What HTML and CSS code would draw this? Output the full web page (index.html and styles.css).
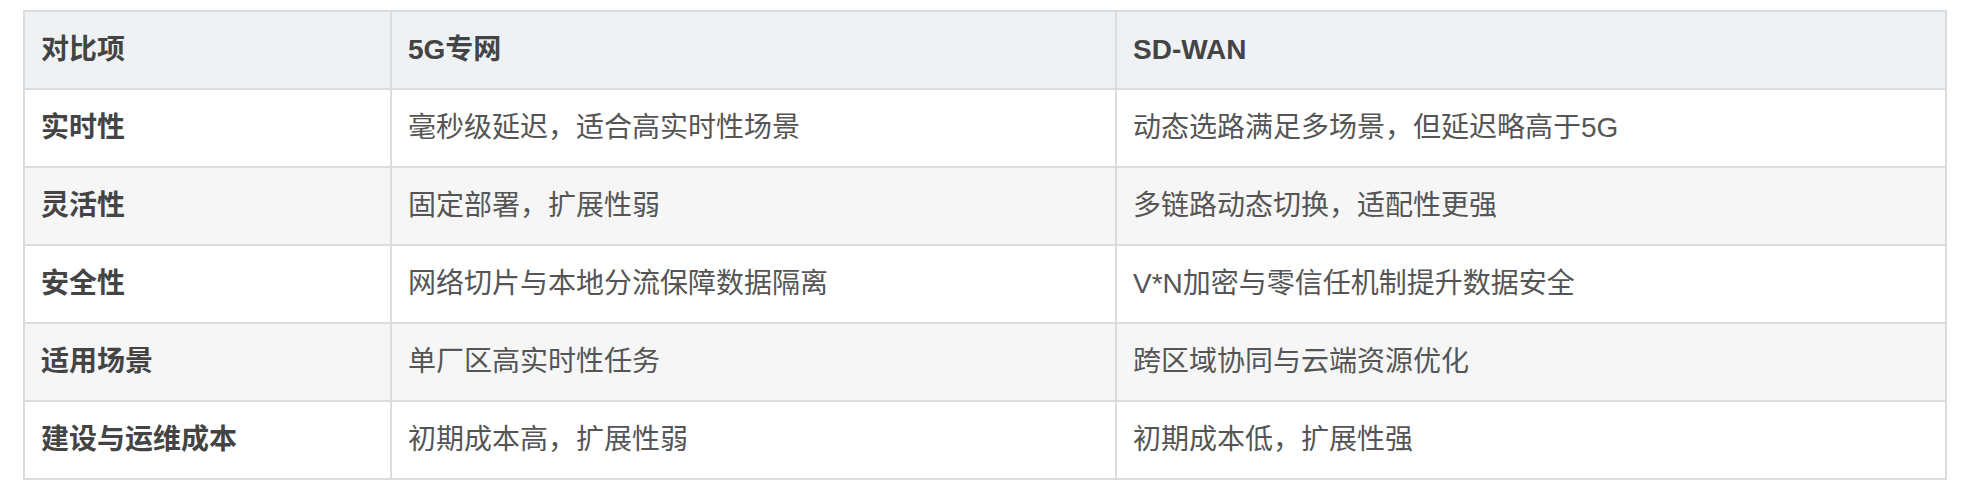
FILE: index.html
```html
<!DOCTYPE html>
<html lang="zh-CN">
<head>
<meta charset="utf-8">
<title>5G专网与SD-WAN对比</title>
<link rel="stylesheet" href="styles.css">
</head>
<body>
<div class="wrap">
<table class="cmp">
  <colgroup>
    <col class="c1">
    <col class="c2">
    <col class="c3">
  </colgroup>
  <thead>
    <tr><th>对比项</th><th>5G专网</th><th>SD-WAN</th></tr>
  </thead>
  <tbody>
    <tr><td class="key">实时性</td><td>毫秒级延迟，适合高实时性场景</td><td>动态选路满足多场景，但延迟略高于5G</td></tr>
    <tr><td class="key">灵活性</td><td>固定部署，扩展性弱</td><td>多链路动态切换，适配性更强</td></tr>
    <tr><td class="key">安全性</td><td>网络切片与本地分流保障数据隔离</td><td>V*N加密与零信任机制提升数据安全</td></tr>
    <tr><td class="key">适用场景</td><td>单厂区高实时性任务</td><td>跨区域协同与云端资源优化</td></tr>
    <tr><td class="key">建设与运维成本</td><td>初期成本高，扩展性弱</td><td>初期成本低，扩展性强</td></tr>
  </tbody>
</table>
</div>
</body>
</html>
```

FILE: styles.css
```css
html, body {
  margin: 0;
  padding: 0;
  background: #ffffff;
}

.wrap {
  padding: 10px 19px 16px 23px;
}

.cmp {
  width: 1924px;
  table-layout: fixed;
  border-collapse: separate;
  border-spacing: 0;
  border-top: 2px solid #dcdcdc;
  border-left: 2px solid #dcdcdc;
  font-family: "Liberation Sans", "Noto Sans CJK SC", sans-serif;
  font-size: 28px;
  line-height: 42px;
  color: #555555;
}

.c1 { width: 367px; }
.c2 { width: 725px; }
.c3 { width: 830px; }

.cmp th,
.cmp td {
  box-sizing: border-box;
  padding: 17px 16px;
  border-right: 2px solid #dcdcdc;
  border-bottom: 2px solid #dcdcdc;
  text-align: left;
  vertical-align: middle;
  white-space: nowrap;
}

.cmp th {
  background: #eef2f5;
  font-weight: bold;
  color: #444444;
}

.cmp td.key {
  font-weight: bold;
  color: #444444;
}

.cmp tbody tr:nth-child(even) td {
  background: #f6f6f6;
}
```
